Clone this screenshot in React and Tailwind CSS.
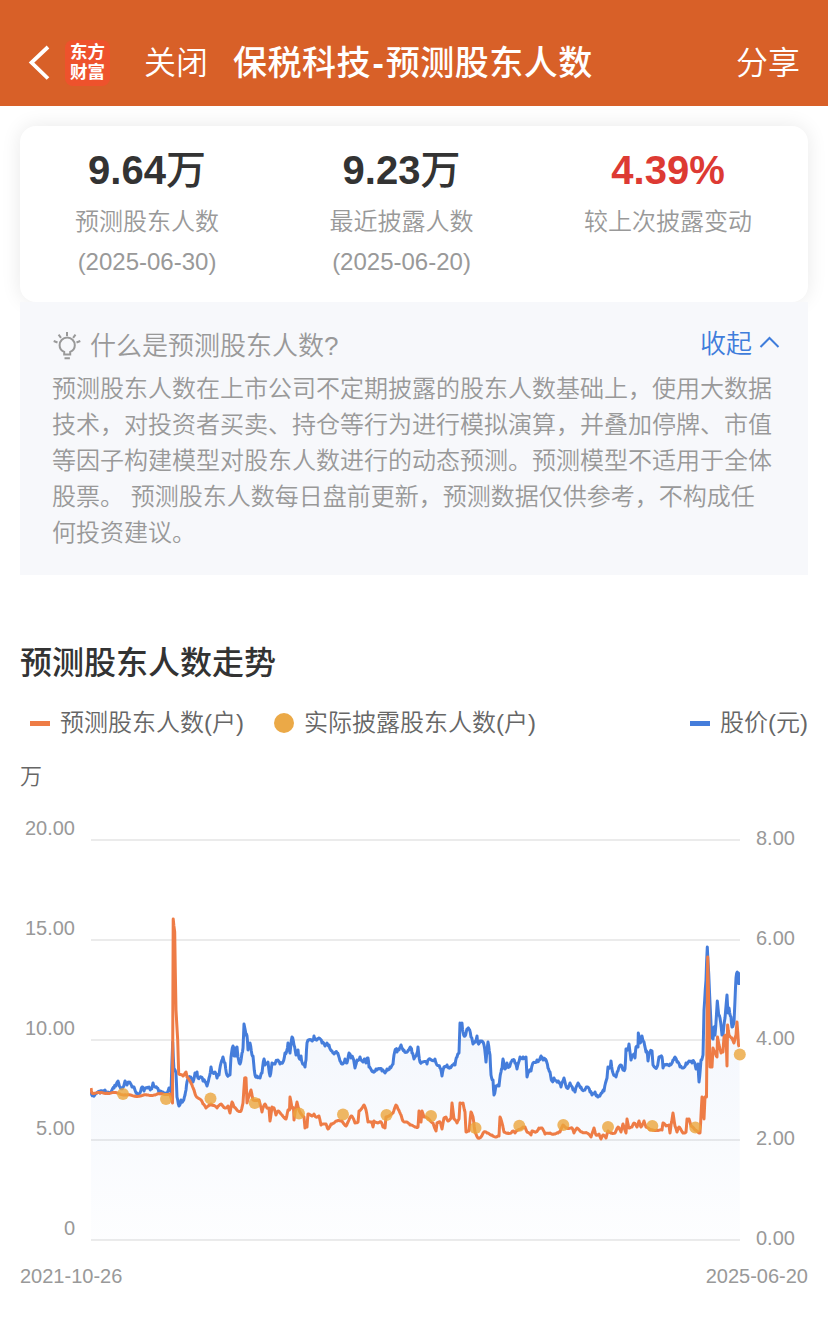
import React from 'react';

const STATS = [
  { value: '9.64', unit: '万', label: '预测股东人数', date: '(2025-06-30)', color: 'text-[#333333]' },
  { value: '9.23', unit: '万', label: '最近披露人数', date: '(2025-06-20)', color: 'text-[#333333]' },
  { value: '4.39%', unit: '', label: '较上次披露变动', date: '', color: 'text-[#dd3a33]' },
];

const LEFT_TICKS = ['20.00', '15.00', '10.00', '5.00', '0'];
const RIGHT_TICKS = ['8.00', '6.00', '4.00', '2.00', '0.00'];
const GRID_LINES = [840, 940, 1040, 1140, 1240];

// price series
const PRICE =
  '91,1092 93,1095 97,1093 100,1093 103,1091 105,1090 108,1092 111,1092 114,1088 116,1086 118,1081 120,1087 123,1087 125,1081 127,1085 129,1083 132,1087 134,1087 137,1093 140,1093 142,1087 144,1091 147,1088 149,1087 151,1089 153,1083 155,1087 157,1088 159,1093 163,1092 166,1093 169,1088 171,1092 172.7,1042 174,1070 176,1073 177,1097 179,1106 181,1100 183,1101 185,1095 186,1090 187,1082 190,1077 193,1082 195,1073 197,1072 198,1078 201,1077 203,1081 205,1082 207,1086 209,1078 211,1067 213,1073 215,1072 217,1078 219,1075 221,1063 223,1057 225,1063 227,1075 230,1075 231,1057 233,1046 234,1056 235,1048 236,1056 237,1047 238,1057 240,1064 242,1053 243,1048 244,1024 246,1035 247,1036 248,1050 250,1043 252,1055 253,1056 255,1075 257,1076 260,1078 262,1073 264,1059 265,1065 268,1062 270,1076 272,1063 275,1064 277,1061 280,1064 283,1062 285,1053 287,1050 288,1043 290,1053 292,1037 294,1045 296,1055 298,1050 299,1058 301,1056 302,1062 305,1067 306,1060 307,1043 310,1040 313,1040 314,1036 316,1039 319,1038 322,1043 325,1046 327,1043 329,1045 332,1051 334,1054 337,1053 340,1061 342,1064 345,1059 347,1063 349,1053 351,1058 353,1058 355,1068 357,1060 360,1057 363,1062 365,1059 366,1063 368,1058 369,1067 373,1071 376,1069 379,1069 382,1071 385,1073 387,1069 390,1067 393,1064 394,1055 396,1049 397,1052 399,1050 401,1045 404,1050 407,1052 409,1050 411,1048 412,1053 414,1059 417,1053 418,1047 420,1062 423,1062 427,1064 429,1059 435,1059 437,1065 440,1068 442,1076 444,1067 447,1065 450,1067 453,1065 455,1065 457,1057 459,1053 460,1023 462,1023 463,1032 465,1036 467,1029 469,1029 471,1037 473,1044 475,1042 477,1036 478,1043 480,1041 482,1041 484,1045 486,1062 488,1042 490,1055 491,1075 493,1080 494,1095 496,1086 499,1086 501,1072 502,1069 503,1059 505,1069 507,1063 509,1067 511,1062 513,1060 515,1063 517,1069 520,1057 523,1057 526,1057 527,1077 529,1072 531,1071 533,1063 537,1060 539,1060 541,1056 543,1060 545,1060 547,1063 548,1068 550,1072 552,1081 554,1078 557,1082 559,1083 561,1087 564,1078 567,1088 570,1083 573,1090 575,1092 578,1083 581,1087 584,1090 587,1087 590,1092 592,1095 595,1092 597,1095 599,1096 602,1093 604,1091 607,1078 608,1067 610,1067 611,1061 613,1073 616,1077 618,1071 621,1065 623,1070 625,1069 626,1049 628,1048 629,1044 631,1060 633,1055 635,1058 636,1047 638,1047 638.3,1033 640,1043 642,1036 644,1042 646,1052 647,1052 648,1061 650,1052 652,1051 653,1065 657,1067 659,1057 662,1057 663,1068 666,1065 670,1064 673,1060 675,1057 677,1062 680,1067 683,1068 686,1063 689,1061 692,1063 694,1062 696,1069 698,1064 699,1082 701,1060 703,1055 703.5,1033 704,1010 706,980 707.3,947 708.7,973 710,1003 711.5,1037 713,1039 714,1027 715,1035 717.3,1001 718.7,1015 720,1018 722,1035 723,1035 725,1018 727,995 728,1013 729,1008 731,1017 732,1027 734,1023 735,1000 736,978 737.3,972 738,983 738.5,973 739.3,985';

// predicted shareholder count
const HOLDERS =
  '91,1088 92,1093 100,1093 107,1093 117,1093 126,1095 135,1096 141,1096 147,1095 154,1095 160,1094 170,1094 172.5,1103 173.2,919 174.7,932 176,1010 177.7,1040 178.7,1074 183,1076 186,1072 187,1077 191,1083 194,1090 196,1096 201,1100 203,1104 206,1108 209,1105 211,1104 215,1106 217,1108 221,1104 225,1108 228,1106 230,1113 232,1102 234,1107 238,1111 241,1111 243,1103 244.7,1078 246,1078 247,1103 251,1090 253,1100 259,1100 262,1112 263,1108 265,1104 267,1108 269,1108 270,1121 272,1107 274,1108 276,1115 278,1111 282,1115 286,1119 288,1110 289.5,1110 290,1097 292,1108 293.5,1108 294,1120 296,1107 297,1102 299,1110 302,1115 304,1117 305,1128 307,1127 308,1114 312,1116 314,1114 316,1117 319,1116 321,1125 326,1124 328,1129 331,1124 334,1123 337,1121 342,1121 346,1126 348,1122 351,1116 353,1118 355,1123 358,1122 359,1111 362,1108 364,1105 366,1110 368,1122 372,1122 373,1127 374,1121 378,1123 381,1122 383,1127 385,1128 386,1117 393,1113 396,1105 398,1109 401,1115 403,1121 407,1122 410,1125 415,1127 418,1127 419,1111 421,1122 422,1111 424,1117 427,1118 433,1123 436,1131 437,1123 440,1122 442,1129 444,1118 446,1117 448,1121 451,1118 452,1103 454,1119 457,1123 459,1119 460,1103 463,1103 465,1112 466,1132 469,1131 471,1112 473,1117 475,1132 478,1138 481,1137 484,1132 487,1133 492,1135 496,1137 499,1136 500,1117 502,1123 504,1132 508,1133 511,1133 513,1131 515,1133 518,1130 523,1127 525,1127 527,1132 531,1135 532,1131 536,1132 539,1128 542,1128 545,1134 550,1133 554,1134 558,1133 560,1132 563,1125 567,1128 572,1128 574,1133 577,1128 582,1132 587,1133 591,1137 594,1128 596,1135 599,1134 601,1139 603,1135 606,1138 608,1131 612,1133 615,1133 618,1127 621,1132 623,1124 626,1133 627,1119 629,1128 632,1127 634,1123 637,1127 639,1121 641,1127 644,1121 646,1127 650,1130 657,1130 662,1130 663,1123 666,1126 669,1125 670,1133 671,1125 673,1113 675,1126 677,1132 679,1127 683,1133 686,1132 687,1119 689,1119 691,1126 695,1130 700,1133 702,1097 703,1100 704,1119 705,1097 706.5,1097 707.7,957 708.7,1003 710,1067 712,1067 713,1048 715,1052 717,1057 717.5,1037 719,1045 721,1053 723,1052 724,1037 726,1035 727,1066 727.6,1025 729,1035 732,1038 734,1043 736,1035 737,1022 738.5,1045 739.3,1047';

// disclosed shareholder count
const DISCLOSED = [
  [123, 1094], [166, 1099], [210.5, 1098.5], [254.7, 1103], [299, 1113.5], [343, 1114.5], [386.5, 1115],
  [431, 1116], [475.5, 1128], [519.3, 1125.7], [563.3, 1125], [608, 1127], [652.3, 1126], [695.3, 1127.5], [739.8, 1054.5],
];

const withDailyMoves = (points, amp) => {
  const pts = points.split(' ').map((p) => p.split(',').map(Number));
  const out = [];
  pts.forEach(([x, y], i) => {
    out.push(`${x},${y}`);
    const next = pts[i + 1];
    if (!next) return;
    const steps = Math.floor(next[0] - x);
    for (let k = 1; k <= steps; k++) {
      const t = k / (steps + 1);
      const move = Math.sin((x + k) * 12.9898) * amp;
      out.push(`${(x + (next[0] - x) * t).toFixed(1)},${(y + (next[1] - y) * t + move).toFixed(1)}`);
    }
  });
  return out.join(' ');
};

const PRICE_LINE = withDailyMoves(PRICE, 1.8);
const HOLDERS_LINE = withDailyMoves(HOLDERS, 0.6);

const NavBar = () => (
  <header className="flex h-[106px] items-center bg-[#d86028] pl-7 pr-[28px] pt-[19px] text-white">
    <svg className="h-9 w-6 shrink-0" viewBox="0 0 24 36" fill="none" stroke="currentColor" strokeWidth="3.8">
      <path d="M20 2 3.500 17.500 20 33.500" />
    </svg>
    <div className="ml-[13px] flex h-[46px] w-[45px] shrink-0 flex-col items-center justify-center rounded-lg bg-[#ee522c] pb-0.5 text-[17.5px] font-bold leading-[20px]">
      <span>东方</span>
      <span>财富</span>
    </div>
    <button className="ml-[34px] text-[32px] font-[350] leading-[40px]">关闭</button>
    <h1 className="ml-[25px] whitespace-nowrap text-[34px] font-medium leading-[40px] tracking-[0.5px]">
      保税科技<span className="px-[1.5px] font-bold">-</span>预测股东人数
    </h1>
    <button className="ml-auto text-[32px] font-[350] leading-[40px]">分享</button>
  </header>
);

const StatsCard = () => (
  <section className="mx-5 mt-5 flex h-[176px] justify-between rounded-2xl bg-white pl-[55px] pr-[56px] pt-[19px] shadow-[0_0_20px_rgba(0,0,0,0.09)]">
    {STATS.map((s) => (
      <div key={s.label} className="flex flex-col items-center text-[24px] font-[350] text-[#999999]">
        <span className={`text-[40px] font-bold leading-[50px] ${s.color}`}>
          {s.value}
          <span className="font-medium">{s.unit}</span>
        </span>
        <span className="mt-[7px] leading-[40px]">{s.label}</span>
        <span className="leading-[40px]">{s.date}</span>
      </div>
    ))}
  </section>
);

const Explain = () => (
  <section className="mx-5 h-[273px] bg-[#f7f8fb] pl-8 pr-[28px] pt-[24px] font-[350] text-[#999999]">
    <div className="flex h-10 items-center">
      <svg className="mr-[8px] h-[30px] w-[30px]" viewBox="0 0 30 30" fill="none" stroke="currentColor" strokeWidth="2">
        <path d="M12.2 23.6v-2.8C9.4 19.6 7.6 17.2 7.6 14.2a7.6 7.6 0 0 1 15.2 0c0 3-1.8 5.400-4.600 6.600v2.800z" />
        <path d="M12.500 27.200h5.400M15 1v4M6.600 3.600l2.400 3.200M23.500 3.600l-2.400 3.200M1.700 10l3.800 1.500M28.300 10l-3.800 1.500" />
      </svg>
      <span className="text-[26px] leading-[40px]">什么是预测股东人数?</span>
      <button className="ml-auto flex items-center pb-1 text-[26px] leading-[36px] text-[#3f7ddb]">
        收起
        <svg className="mb-[5px] ml-[7px] h-3 w-[21px]" viewBox="0 0 21 12" fill="none" stroke="currentColor" strokeWidth="2">
          <path d="M1.500 11 10.500 2 19.500 11" />
        </svg>
      </button>
    </div>
    <p className="mt-[5px] w-[721px] text-[24px] leading-[36px]">
      预测股东人数在上市公司不定期披露的股东人数基础上，使用大数据技术，对投资者买卖、持仓等行为进行模拟演算，并叠加停牌、市值等因子构建模型对股东人数进行的动态预测。预测模型不适用于全体股票。 预测股东人数每日盘前更新，预测数据仅供参考，不构成任何投资建议。
    </p>
  </section>
);

const Legend = () => (
  <div className="mt-[20px] flex h-[40px] items-center pl-[30px] pr-5 text-[24px] font-[350] text-[#666666]">
    <span className="mr-[10px] h-[5px] w-5 bg-[#ee7c46]" />
    <span>预测股东人数(户)</span>
    <span className="ml-[30px] mr-[10px] h-5 w-5 rounded-full bg-[#eba947]" />
    <span>实际披露股东人数(户)</span>
    <span className="ml-auto mr-[10px] h-[5px] w-5 bg-[#457ddb]" />
    <span>股价(元)</span>
  </div>
);

const TrendChart = () => (
  <div className="mt-[26px] flex h-[430px] text-[20px] leading-[20px] text-[#999999]">
    <div className="flex h-[420px] w-[75px] flex-col justify-between text-right">
      {LEFT_TICKS.map((t) => (
        <span key={t}>{t}</span>
      ))}
    </div>
    <svg className="ml-[15px] h-[430px] w-[660px] shrink-0" viewBox="90 818 660 430" fill="none">
      <defs>
        <linearGradient id="area" x1="0" y1="947" x2="0" y2="1240" gradientUnits="userSpaceOnUse">
          <stop offset="0" stopColor="#457ddb" stopOpacity="0.08" />
          <stop offset="1" stopColor="#457ddb" stopOpacity="0.01" />
        </linearGradient>
        <clipPath id="plot">
          <rect x="90" y="820" width="650" height="430" />
        </clipPath>
      </defs>
      {GRID_LINES.map((y) => (
        <path key={y} d={`M91 ${y}H740`} stroke="#ebebeb" strokeWidth="2" />
      ))}
      <g clipPath="url(#plot)">
        <polygon points={`91,1240 ${PRICE} 740,1240`} fill="url(#area)" />
        <polyline points={PRICE_LINE} stroke="#457ddb" strokeWidth="3" strokeLinejoin="round" />
        <polyline points={HOLDERS_LINE} stroke="#ee7c46" strokeWidth="3" strokeLinejoin="round" />
      </g>
      {DISCLOSED.map(([x, y]) => (
        <circle key={x} cx={x} cy={y} r="6" fill="#eba53c" fillOpacity="0.8" />
      ))}
    </svg>
    <div className="mt-[10px] ml-[6px] flex h-[420px] flex-col justify-between">
      {RIGHT_TICKS.map((t) => (
        <span key={t}>{t}</span>
      ))}
    </div>
  </div>
);

const App = () => {
  return (
    <div className="h-[1320px] w-[828px] overflow-hidden bg-white font-['Liberation_Sans','Noto_Sans_CJK_SC',sans-serif]">
      <NavBar />
      <StatsCard />
      <Explain />
      <main>
        <h2 className="mt-[68px] pl-5 text-[32px] font-medium leading-[40px] text-[#333333]">预测股东人数走势</h2>
        <Legend />
        <div className="mt-[19px] pl-5 text-[22px] font-[350] leading-[30px] text-[#666666]">万</div>
        <TrendChart />
        <div className="mt-[18px] flex justify-between px-5 text-[20px] leading-[20px] text-[#999999]">
          <span>2021-10-26</span>
          <span>2025-06-20</span>
        </div>
      </main>
    </div>
  );
};

export default App;
